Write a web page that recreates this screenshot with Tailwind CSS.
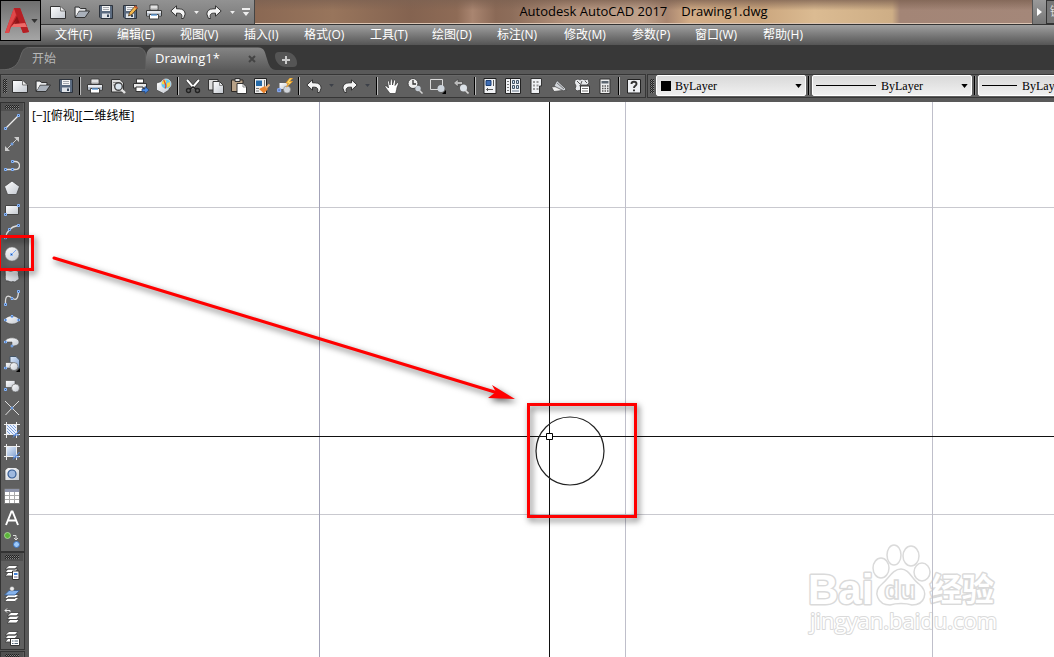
<!DOCTYPE html>
<html lang="zh-CN">
<head>
<meta charset="utf-8">
<meta name="viewport" content="width=device-width, initial-scale=1">
<title>Autodesk AutoCAD 2017 - Drawing1.dwg</title>
<script src="https://cdn.jsdelivr.net/npm/@tailwindcss/browser@4"></script>
</head>
<body class="relative flex h-screen flex-col overflow-hidden bg-[#5a5a5a] font-['Open_Sans','Noto_Sans_CJK_SC',sans-serif] text-xs">

<svg class="absolute h-0 w-0" aria-hidden="true">
  <defs>
    <linearGradient id="metal" x1="0" y1="0" x2="1" y2="1"><stop offset="0" stop-color="#fff"/><stop offset="1" stop-color="#c3c8d0"/></linearGradient>
    <linearGradient id="sky" x1="0" y1="0" x2="1" y2="1"><stop offset="0" stop-color="#e3edfb"/><stop offset="1" stop-color="#7f9fce"/></linearGradient>
  </defs>
  <symbol id="new" viewBox="0 0 16 16"><path d="M.5 2.500H10.500L15.500 7V14.500H.5Z" fill="url(#metal)" stroke="#333"/><path d="M10.500 2.500V7H15" fill="#eee" stroke="#777"/></symbol>
  <symbol id="open" viewBox="0 0 16 16"><path d="M1 13V3H5L6.500 4.500H12V7" fill="#cfd3d9" stroke="#333"/><path d="M1 13.500L5 7H15.500L11 13.500Z" fill="#a9b0ba" stroke="#333"/><path d="M2 12V4H5L6 5.500H11V6.500H5Z" fill="#f4f4f4"/></symbol>
  <symbol id="save" viewBox="0 0 16 16"><path d="M1.500 1.500H14.500V14.500H3L1.500 13Z" fill="#5b6b80" stroke="#2d333c"/><path d="M4 2H12V7H4Z" fill="#f5f5f5"/><path d="M5 3.500H11M5 5.500H11" stroke="#a5a9b0"/><path d="M4 9.500H12V14H4Z" fill="#dfe3e8"/><path d="M9 10.500H11V13H9Z" fill="#38485c"/></symbol>
  <symbol id="saveas" viewBox="0 0 16 16"><use href="#save"/><path d="M6.500 12L7.500 8.500L13 2L15.500 4L10 10.500Z" fill="#f3b64c" stroke="#443322" stroke-width=".8"/><path d="M12 3L13.500 1.500L15.800 3.500L14.500 5Z" fill="#c95b2e"/></symbol>
  <symbol id="print" viewBox="0 0 16 16"><path d="M4 1H12V6H4Z" fill="#fff" stroke="#444"/><path d="M5 3H11M5 4.500H11" stroke="#b5b5b5" stroke-width=".8"/><path d="M.5 6.500H15.500V12H.5Z" fill="#e8ebef" stroke="#3a3a3a"/><path d="M1 9H15V11.500H1Z" fill="#b6bec9"/><path d="M3.500 10.500H12.500V15H3.500Z" fill="#fff" stroke="#444"/><path d="M5 11H11" stroke="#5b9ad9" stroke-width="1.400"/></symbol>
  <symbol id="preview" viewBox="0 0 16 16"><path d="M1.500 1.500H10L13.500 5V14H1.500Z" fill="#ddd" stroke="#333"/><path d="M3 4.500H8M3 7H6" stroke="#888"/><circle cx="8.500" cy="8.500" r="3.800" fill="#dbe5ee" stroke="#444" stroke-width="1.400"/><path d="M11.500 11.500L15 15" stroke="#e3e3e3" stroke-width="2.400"/></symbol>
  <symbol id="publish" viewBox="0 0 16 16"><path d="M3.500 1H10.500V5H3.500Z" fill="#fff" stroke="#333"/><path d="M.5 5.500H13.500V10H.5Z" fill="#e9e9e9" stroke="#333"/><path d="M3 9H10V13.500H3Z" fill="#fff" stroke="#333"/><path d="M9 11H12V8.500L16 12L12 15.500V13.500H9Z" fill="#4c8de6" stroke="#1c3f77" stroke-width=".7"/></symbol>
  <symbol id="globe" viewBox="0 0 16 16"><path d="M.5 5L7 3L13 7V12L7.500 15.500L.5 12Z" fill="url(#metal)" stroke="#444" stroke-width=".7"/><circle cx="10" cy="6" r="5" fill="#62c5ee" stroke="#e8e8e8" stroke-width=".8"/><path d="M6 4C8 1 11 2 10 4S8 7 6 6ZM11 5L14 4V8L11 10Z" fill="#f8d543"/><path d="M8 1.500C7 4 12 6 9 10.500" stroke="#dd462c" fill="none" stroke-width="1.200"/></symbol>
  <symbol id="cut" viewBox="0 0 16 16"><path d="M2 2L9 10M14 2L7 10" stroke="#222" stroke-width="3.400"/><path d="M2 2L9 10M14 2L7 10" stroke="#fff" stroke-width="2"/><circle cx="3.500" cy="12.500" r="2" fill="none" stroke="#222" stroke-width="1.400"/><circle cx="12.500" cy="12.500" r="2" fill="none" stroke="#222" stroke-width="1.400"/><path d="M5 11L8 9L11 11" fill="none" stroke="#222" stroke-width="1.500"/></symbol>
  <symbol id="copy" viewBox="0 0 16 16"><path d="M.5 1.500H10V12H.5Z" fill="#ddd" stroke="#333"/><path d="M5 3.500H11.500L15.500 7.500V15.500H5Z" fill="url(#metal)" stroke="#333"/><path d="M11.500 4V7.500H15" fill="none" stroke="#888"/></symbol>
  <symbol id="paste" viewBox="0 0 16 16"><path d="M.5 2H12V13.500H.5Z" fill="#b8a288" stroke="#2d2925"/><path d="M4 .5H9V3.500H4Z" fill="#ddd" stroke="#333"/><path d="M6 5.500H12L15.500 9V15.500H6Z" fill="#fff" stroke="#333"/><path d="M12 6V9H15" fill="none" stroke="#888"/></symbol>
  <symbol id="match" viewBox="0 0 16 16"><path d="M.5 .5H12.500V15.500H.5Z" fill="#eee" stroke="#222"/><path d="M2 2.500H8V8H2Z" fill="#246aa9"/><path d="M10.500 2V9M2 10.500H5M2 13H5" stroke="#777"/><path d="M5 11L11 8L14 11L10 15.500Z" fill="#e9842e"/><path d="M12 10L15.500 6.500" stroke="#efb175" stroke-width="2"/></symbol>
  <symbol id="block" viewBox="0 0 16 16"><path d="M2.500 5H10.500V11H2.500Z" fill="url(#metal)"/><circle cx="10" cy="11.500" r="3.500" fill="#d1d5db" stroke="#777" stroke-width=".5"/><path d="M.7 10.700H3.700V13.700H.7Z" fill="#5b7ec5" stroke="#8fb2ff"/><path d="M13 0L9 5H11.500L9.500 9L15.500 3.500H12.500L15.500 0Z" fill="#ffe16b" stroke="#e99625" stroke-width=".8"/></symbol>
  <symbol id="undo" viewBox="0 0 16 16"><path d="M.8 7L6.500 1.800V4.800H9C13 4.800 15 7 15.200 10L13.500 14.500H11.500C12.500 11 11.500 9.200 8.500 9.200H6.500V12.200Z" fill="#f5f5f5" stroke="#333"/></symbol>
  <symbol id="redo" viewBox="0 0 16 16"><path d="M15.200 7L9.500 1.800V4.800H7C3 4.800 1 7 .8 10L2.500 14.500H4.500C3.500 11 4.500 9.200 7.500 9.200H9.500V12.200Z" fill="#f5f5f5" stroke="#333"/></symbol>
  <symbol id="hand" viewBox="0 0 16 16"><path d="M6 15.500C4 13 2 10 .8 8.500C1.800 7 3.500 8.500 4.500 10L3.500 3.500C4.500 2 5.500 3 6 7L6.500 1.500C7.500 .2 8.500 1 8.500 7L10 2C11.500 1 12 2 11 7.500L13.500 4.500C15 4.500 14.500 6 13 9.500C12.500 13 12 14 11.500 15.500Z" fill="#fff" stroke="#333" stroke-width=".7"/></symbol>
  <symbol id="zoomrt" viewBox="0 0 16 16"><circle cx="6" cy="5.500" r="5" fill="#eee" stroke="#444"/><path d="M6 2V6H9" stroke="#333" fill="none" stroke-width="1.300"/><circle cx="11" cy="10.500" r="2.700" fill="#c9d0d8"/><path d="M12.500 12.500L15.500 15.500" stroke="#d5d5d5" stroke-width="1.500"/></symbol>
  <symbol id="zoomwin" viewBox="0 0 16 16"><path d="M.5 1.500H12.500V11.500H.5Z" fill="none" stroke="#d9d9d9"/><circle cx="11" cy="10.500" r="3.500" fill="#cdd4dc"/><path d="M16 12V16H12Z" fill="#000"/></symbol>
  <symbol id="zoomprev" viewBox="0 0 16 16"><path d="M.5 5L5 1V3.500H9.500V6.500H5V9Z" fill="#bbb" stroke="#444" stroke-width=".7"/><circle cx="10.500" cy="10" r="3.500" fill="#dce2e8"/><path d="M12.500 12.500L15.500 15.500" stroke="#d5d5d5" stroke-width="1.700"/></symbol>
  <symbol id="props" viewBox="0 0 16 16"><path d="M2 .5H14V15.500H2Z" fill="#f0f2f5" stroke="#222"/><path d="M4 2.500H9V7.500H4Z" fill="#3d6db5" stroke="#1d3f72"/><path d="M11.500 2V8M4.500 11.500H11M6 10L4.500 11.500L6 13" fill="none" stroke="#555"/></symbol>
  <symbol id="dcenter" viewBox="0 0 16 16"><path d="M.5 .5H15.500V15.500H.5Z" fill="#f0f2f5" stroke="#222"/><path d="M5.500 1V15" stroke="#333"/><path d="M2 3.500H4M2 6.500H4M2 9.500H4M2 12.500H4" stroke="#777"/><path d="M7.500 2.500H9.500V5.500H7.500ZM11.500 2.500H13.500V5.500H11.500ZM7.500 7.500H9.500V10.500H7.500ZM11.500 7.500H13.500V10.500H11.500Z" fill="#cde" stroke="#456"/><path d="M7 13H14" stroke="#678"/></symbol>
  <symbol id="palette" viewBox="0 0 16 16"><path d="M3 .5H13.500V8H11.500V15.500H3Z" fill="#eff1f4" stroke="#333"/><path d="M5 3H7V5H5ZM8.500 3H10.500V5H8.500ZM5 6.500H7V8.500H5ZM8.500 6.500H10.500V8.500H8.500ZM5 10H7V12H5ZM8.500 10H10.500V12H8.500Z" fill="#999"/></symbol>
  <symbol id="sheets" viewBox="0 0 16 16"><path d="M.5 9L10 8L15.500 12L3 13.500Z" fill="#eee" stroke="#444" stroke-width=".7"/><path d="M3 8L6 2.500L15 11L13 13Z" fill="#cfd3d8" stroke="#444" stroke-width=".7"/><path d="M6 5L13 11" stroke="#777"/></symbol>
  <symbol id="markup" viewBox="0 0 16 16"><path d="M1 2L4 1L6 2L8 1L11 2L14 1L15 5L13 7H6L7 12L3 13L1 11L2 8L.5 5Z" fill="#e8eaed" stroke="#444" stroke-width=".8"/><path d="M3 3L6 6M8 3L6 8M11 3L13 5" stroke="#555"/><path d="M6.500 8H15.500V15.500H6.500Z" fill="#fff" stroke="#333"/><path d="M8 10.500H14M8 13H14" stroke="#777"/></symbol>
  <symbol id="calc" viewBox="0 0 16 16"><path d="M3 1H13V15.500H3Z" fill="#eee" stroke="#333"/><path d="M4.500 3H11.500V5.500H4.500Z" fill="#5c6670"/><path d="M5 8H6.500M7.500 8H9M10 8H11.500M5 10.500H6.500M7.500 10.500H9M10 10.500H11.500M5 13H6.500M7.500 13H9M10 13H11.500" stroke="#555" stroke-width="1.400"/></symbol>
  <symbol id="help" viewBox="0 0 16 16"><path d="M1.500 1.500H14.500V15H1.500Z" fill="#eef0f3" stroke="#222"/><path d="M5.500 6C5.500 3 10.500 3 10.500 6C10.500 8 8 7.500 8 10" fill="none" stroke="#333" stroke-width="1.900"/><path d="M7 11.500H9V13.300H7Z" fill="#333"/></symbol>

  <symbol id="node" viewBox="0 0 3 3"><path d="M.5 .5H2.500V2.500H.5Z" fill="#35547f" stroke="#86b6ff"/></symbol>
  <symbol id="line" viewBox="0 0 16 16"><path d="M1.500 14.500L14.500 1.500" stroke="#eee" stroke-width="1.200"/><use href="#node" y="13" width="3" height="3"/><use href="#node" x="13" width="3" height="3"/></symbol>
  <symbol id="xline" viewBox="0 0 16 16"><path d="M3 13L13 3" stroke="#ccc"/><path d="M10 1H15V6ZM1 10V15H6Z" fill="#ccc"/><use href="#node" x="6.500" y="6.500" width="3" height="3"/></symbol>
  <symbol id="pline" viewBox="0 0 16 16"><path d="M1 11.500H11C17 11.500 17 3.500 11 3.500H9" fill="none" stroke="#ddd" stroke-width="1.300"/><use href="#node" y="10" width="3" height="3"/><use href="#node" x="7" y="10" width="3" height="3"/><use href="#node" x="7" y="2" width="3" height="3"/></symbol>
  <symbol id="polygon" viewBox="0 0 16 16"><path d="M8 1L15.500 6.500L12.500 14.500H3.500L.5 6.500Z" fill="url(#metal)" stroke="#444" stroke-width=".8"/></symbol>
  <symbol id="rect" viewBox="0 0 16 16"><path d="M1.500 3.500H14.500V12.500H1.500Z" fill="url(#metal)" stroke="#444"/><use href="#node" y="11" width="3" height="3"/><use href="#node" x="13" y="2" width="3" height="3"/></symbol>
  <symbol id="arc" viewBox="0 0 16 16"><path d="M1.500 14C2.500 7 6 3 14 1.500" fill="none" stroke="#ddd" stroke-width="1.300"/><use href="#node" y="12.500" width="3" height="3"/><use href="#node" x="4" y="4" width="3" height="3"/><use href="#node" x="13" width="3" height="3"/></symbol>
  <symbol id="circle" viewBox="0 0 16 16"><circle cx="8" cy="8" r="7" fill="url(#metal)" stroke="#777" stroke-width=".5"/><path d="M8 8L12 4" stroke="#7fa9f0"/><use href="#node" x="6" y="7" width="3" height="3"/></symbol>
  <symbol id="cloud" viewBox="0 0 16 16"><path d="M1 3C4 1.500 5 4 8 3S13 2 14.500 4C13.500 7 16 10 14.500 12C12 12 12 15 9 13.500C6 15 5 12 2 13C.5 10 2 7 1 3Z" fill="url(#metal)" stroke="#444" stroke-width=".7"/></symbol>
  <symbol id="spline" viewBox="0 0 16 16"><path d="M1.500 14C1 5 4 5 8 8S14 9 14.500 2" fill="none" stroke="#ddd" stroke-width="1.300"/><use href="#node" y="13" width="3" height="3"/><use href="#node" x="6.500" y="7" width="3" height="3"/><use href="#node" x="13" width="3" height="3"/></symbol>
  <symbol id="ellipse" viewBox="0 0 16 16"><ellipse cx="8" cy="8" rx="7" ry="4" fill="url(#metal)" stroke="#444" stroke-width=".5"/><use href="#node" y="6.500" width="3" height="3"/><use href="#node" x="13" y="6.500" width="3" height="3"/><use href="#node" x="6.500" y="3" width="3" height="3"/></symbol>
  <symbol id="ellarc" viewBox="0 0 16 16"><path d="M1 8C2 2 15 3 15 8C15 11 12 12 8 12V8Z" fill="url(#metal)" stroke="#444" stroke-width=".5"/><use href="#node" y="6.500" width="3" height="3"/><use href="#node" x="6.500" y="10.500" width="3" height="3"/></symbol>
  <symbol id="insert" viewBox="0 0 16 16"><path d="M6 .5H12L15.500 4V12H6Z" fill="url(#sky)" stroke="#456"/><path d="M1.500 6.500H9V12H1.500Z" fill="url(#metal)" stroke="#444" stroke-width=".6"/><circle cx="10" cy="10.500" r="4" fill="url(#metal)" stroke="#555" stroke-width=".6"/><use href="#node" y="10.500" width="3" height="3"/><path d="M16 12V16H12Z"/></symbol>
  <symbol id="makeblock" viewBox="0 0 16 16"><path d="M1.500 2.500H11V9.500H1.500Z" fill="url(#metal)" stroke="#444" stroke-width=".6"/><circle cx="11.500" cy="10" r="4" fill="url(#metal)" stroke="#555" stroke-width=".6"/><use href="#node" y="10" width="3" height="3"/></symbol>
  <symbol id="point" viewBox="0 0 16 16"><path d="M1 1L8 8L15 1M8 8L1.500 15M8 8L15 15" stroke="#ddd" fill="none"/><use href="#node" x="6.500" y="6.500" width="3" height="3"/></symbol>
  <symbol id="hatch" viewBox="0 0 16 16"><path d="M3 3H13V13H3Z" fill="#e9f1ff"/><path d="M3 3L13 13M6 3L13 10M9 3L13 7M3 6L10 13M3 9L7 13" stroke="#7fa3dc"/><path d="M2.500 0V16M12.500 0V16M0 2.500H16M0 12.500H16" stroke="#eee"/><path d="M15.500 8L9 15.500M15 13H9" stroke="#528ce9"/></symbol>
  <symbol id="gradient" viewBox="0 0 16 16"><path d="M3 3H13V13H3Z" fill="url(#sky)"/><path d="M2.500 0V16M12.500 0V16M0 2.500H16M0 12.500H16" stroke="#eee"/><path d="M15.500 8L9 15.500M15 13H9" stroke="#528ce9"/></symbol>
  <symbol id="region" viewBox="0 0 16 16"><path d="M1 4L4 1.500H12L15.500 4V14.500H1Z" fill="url(#metal)" stroke="#444" stroke-width=".7"/><circle cx="8" cy="8" r="4" fill="#9fb9df" stroke="#345b92" stroke-width="1.200"/></symbol>
  <symbol id="table" viewBox="0 0 16 16"><path d="M.5 1H15.500V15.500H.5Z" fill="#fff" stroke="#777"/><path d="M1 1H15V4H1Z" fill="#8f95aa"/><path d="M1 7.500H15M1 11.500H15M5.500 4V15M10.500 4V15" stroke="#aaa"/></symbol>
  <symbol id="text" viewBox="0 0 16 16"><path d="M2 15L7.500 1.500H8.500L14 15M4 10.500H12" fill="none" stroke="#fff" stroke-width="1.900"/></symbol>
  <symbol id="addsel" viewBox="0 0 16 16"><circle cx="3.500" cy="3.500" r="3" fill="#5bb53a" stroke="#b8e2a5" stroke-width=".8"/><path d="M9 3.500H12V7M10 6L12 8L14 6" fill="none" stroke="#ddd"/><circle cx="12.500" cy="12.500" r="3" fill="#9dc9fa" stroke="#3c73bf"/></symbol>
  <symbol id="sheet3" viewBox="0 0 16 16"><path d="M4 8.500H14L11 12H1ZM4 5H14L11 8.500H1ZM5 1.500H14L11 5H1Z" fill="#fff" stroke="#444" stroke-width=".9"/></symbol>
  <symbol id="layers" viewBox="0 0 16 16"><use href="#sheet3"/><path d="M8.500 7H15V15.500H8.500Z" fill="#fff" stroke="#333"/><path d="M10 9H13.500V11H10Z" fill="#3f7fd8"/><path d="M10 13H13.500" stroke="#668"/></symbol>
  <symbol id="layercur" viewBox="0 0 16 16"><path d="M4 11.500H15L11 15.500H.5ZM4 8.500H15L11 12.500H.5Z" fill="#fff" stroke="#444" stroke-width=".8"/><path d="M5 4.500H15.500L11 9H.5Z" fill="#85b3ee" stroke="#335a90" stroke-width=".8"/><circle cx="8" cy="2.800" r="2.300" fill="#eee" stroke="#666" stroke-width=".5"/></symbol>
  <symbol id="layerprev" viewBox="0 0 16 16"><path d="M6 11.500H15.500L12.500 15H3ZM6 8H15.500L12.500 11.500H3ZM7 4.500H15.500L12.500 8H3Z" fill="#fff" stroke="#444" stroke-width=".9"/><path d="M6 4V2.500H1M3 .5L1 2.500L3 4.500" fill="none" stroke="#eee"/></symbol>
  <symbol id="layerstate" viewBox="0 0 16 16"><use href="#sheet3"/><path d="M6.500 8.500H15.500V15.500H6.500Z" fill="#fff" stroke="#333"/><path d="M8 11H9.500M10.500 11H14M8 13.500H9.500M10.500 13.500H14" stroke="#567"/></symbol>
  <symbol id="caret" viewBox="0 0 8 5"><path d="M0 0H8L4 5Z" fill="currentColor"/></symbol>
</svg>

<header class="relative shrink-0">
  <button aria-label="应用程序菜单" class="absolute top-0 left-0 z-10 flex h-[41px] w-[41px] items-center justify-between border border-black bg-linear-to-b from-[#6f6f6f] to-[#a5a5a5] pr-[2px] pl-1 text-[#333]">
    <svg class="h-7 w-6" viewBox="0 0 24 28"><path d="M0 26L9 1H15L24 25L18 26L15 19L6 20L4 26Z" fill="#c5282c"/><path d="M0 26L9 1L11 8L5 20L4 26Z" fill="#e0484a"/><path d="M9 1H15L24 25L18 26L11 6Z" fill="#b51f24"/><path d="M12 9L15 17L6 20Z" fill="#8f1519"/><path d="M6 20L12 13L9 17L20 16L22 20Z" fill="#ee6a68"/></svg>
    <svg class="h-1 w-[7px]"><use href="#caret"/></svg>
  </button>

  <div class="flex h-[25px] border-b border-[#333]">
    <div class="flex w-[255px] shrink-0 items-center border-r border-[#444] bg-linear-to-b from-[#929292] to-[#777] pl-[46px] text-[#eee]">
      <button aria-label="新建" class="flex h-6 w-6 items-center justify-center"><svg class="h-4 w-4"><use href="#new"/></svg></button>
      <button aria-label="打开" class="flex h-6 w-6 items-center justify-center"><svg class="h-4 w-4"><use href="#open"/></svg></button>
      <button aria-label="保存" class="flex h-6 w-6 items-center justify-center"><svg class="h-4 w-4"><use href="#save"/></svg></button>
      <button aria-label="另存为" class="flex h-6 w-6 items-center justify-center"><svg class="h-4 w-4"><use href="#saveas"/></svg></button>
      <button aria-label="打印" class="flex h-6 w-6 items-center justify-center"><svg class="h-4 w-4"><use href="#print"/></svg></button>
      <button aria-label="放弃" class="flex h-6 w-6 items-center justify-center"><svg class="h-4 w-4"><use href="#undo"/></svg></button>
      <button aria-label="放弃列表" class="flex h-6 w-3 items-center justify-center"><svg class="h-[3px] w-[5px]"><use href="#caret"/></svg></button>
      <button aria-label="重做" class="flex h-6 w-6 items-center justify-center"><svg class="h-4 w-4"><use href="#redo"/></svg></button>
      <button aria-label="重做列表" class="flex h-6 w-3 items-center justify-center"><svg class="h-[3px] w-[5px]"><use href="#caret"/></svg></button>
      <button aria-label="自定义" class="flex h-6 w-4 flex-col items-center justify-center gap-[2px]"><span class="h-[2px] w-2 bg-[#eee]"></span><svg class="h-1 w-2"><use href="#caret"/></svg></button>
    </div>
    <div class="flex min-w-0 flex-1 items-center justify-center gap-[14px] border-b border-[#dcc6b5] bg-[linear-gradient(180deg,rgba(125,98,82,0.8)_0%,transparent_45%),linear-gradient(90deg,#8a6853_0%,#98755c_10%,#846350_20%,#8e6b56_26%,#a98570_28%,#8a6956_31%,#8d6d5a_33%,#b3927c_40%,#c0a28c_50%,#a98670_53%,#d3ad87_56%,#cba67e_65%,#dbbb92_72%,#ceae86_82%,#a38576_83%,#a48779_100%)] text-[13px] text-black">
      <span>Autodesk AutoCAD 2017</span><span>Drawing1.dwg</span>
    </div>
    <button aria-label="展开搜索" class="flex w-[14px] shrink-0 items-center justify-center border-l border-[#555] bg-linear-to-b from-[#999] to-[#777] text-white"><svg class="h-2 w-[5px]" viewBox="0 0 5 8"><path d="M0 0L5 4L0 8Z" fill="currentColor"/></svg></button>
    <button aria-label="键入关键字" class="w-2 shrink-0 overflow-hidden border border-r-0 border-[#333] bg-[#777] pl-[3px] text-left whitespace-nowrap text-[#ddd]">键入</button>
  </div>

  <nav class="grid h-5 grid-cols-[62px_63px_64px_60px_66px_62px_65px_67px_68px_63px_68px_auto] items-center bg-linear-to-b from-[#a0a0a0] to-[#555] pl-[55px] whitespace-nowrap text-white">
    <a href="#">文件(F)</a><a href="#">编辑(E)</a><a href="#">视图(V)</a><a href="#">插入(I)</a><a href="#">格式(O)</a><a href="#">工具(T)</a><a href="#">绘图(D)</a><a href="#">标注(N)</a><a href="#">修改(M)</a><a href="#">参数(P)</a><a href="#">窗口(W)</a><a href="#">帮助(H)</a>
  </nav>
</header>

<div class="flex h-[25px] shrink-0 items-end bg-[#383838]">
  <button class="relative h-[23px] w-[146px] pl-8 text-left text-[#b8b8b8]">
    <svg class="absolute inset-0 h-full w-full" viewBox="0 0 146 23" preserveAspectRatio="none"><path d="M0 23C14 23 18 18 21 8C23 2 25 .5 30 .5H138C143 .5 145 4 146 8V23Z" fill="#555" stroke="#666"/></svg>
    <span class="relative">开始</span>
  </button>
  <button class="relative flex h-[23px] w-[130px] items-center justify-between pr-5 pl-[9px] text-[13px] text-white">
    <svg class="absolute inset-0 h-full w-full" viewBox="0 0 130 23" preserveAspectRatio="none"><defs><linearGradient id="tab" x1="0" y1="0" x2="0" y2="1"><stop offset="0" stop-color="#858585"/><stop offset="1" stop-color="#5a5a5a"/></linearGradient></defs><path d="M0 23V10C1 3 3 .5 8 .5H112C119 .5 119 6 121 12C123 19 125 23 130 23Z" fill="url(#tab)"/></svg>
    <span class="relative">Drawing1*</span>
    <svg class="relative h-2 w-2" viewBox="0 0 8 8"><path d="M1 1L7 7M7 1L1 7" stroke="#444" stroke-width="2"/></svg>
  </button>
  <button aria-label="新图形" class="mb-[3px] ml-[-1px] flex h-[15px] w-[22px] items-center justify-center rounded-tl-sm rounded-tr-xl rounded-br-sm rounded-bl-xl bg-[#555]"><svg class="h-2 w-2" viewBox="0 0 8 8"><path d="M4 0V8M0 4H8" stroke="#ccc" stroke-width="2"/></svg></button>
</div>

<div class="flex h-8 shrink-0 items-center overflow-hidden bg-[#595959] pb-px">
  <div class="flex h-6 shrink-0 items-center border border-[#363636] bg-[#606060] text-[#3c4048] shadow-[inset_0_1px_#686868]" role="toolbar" aria-label="标准">
    <span class="mr-px ml-[2px] h-[14px] w-1 bg-[conic-gradient(#222_25%,#888_0_50%,#222_0_75%,#555_0)] bg-[length:2px_2px]"></span>
    <button aria-label="新建" class="flex w-[23px] justify-center"><svg class="h-4 w-4"><use href="#new"/></svg></button>
    <button aria-label="打开" class="flex w-[23px] justify-center"><svg class="h-4 w-4"><use href="#open"/></svg></button>
    <button aria-label="保存" class="flex w-[23px] justify-center"><svg class="h-4 w-4"><use href="#save"/></svg></button>
    <span class="mx-[2px] h-[18px] w-[2px] border-l border-black bg-[#bbb]"></span>
    <button aria-label="打印" class="flex w-[23px] justify-center"><svg class="h-4 w-4"><use href="#print"/></svg></button>
    <button aria-label="打印预览" class="flex w-[23px] justify-center"><svg class="h-4 w-4"><use href="#preview"/></svg></button>
    <button aria-label="发布" class="flex w-[23px] justify-center"><svg class="h-4 w-4"><use href="#publish"/></svg></button>
    <button aria-label="三维打印" class="flex w-[23px] justify-center"><svg class="h-4 w-4"><use href="#globe"/></svg></button>
    <span class="mx-[2px] h-[18px] w-[2px] border-l border-black bg-[#bbb]"></span>
    <button aria-label="剪切" class="flex w-[23px] justify-center"><svg class="h-4 w-4"><use href="#cut"/></svg></button>
    <button aria-label="复制" class="flex w-[23px] justify-center"><svg class="h-4 w-4"><use href="#copy"/></svg></button>
    <button aria-label="粘贴" class="flex w-[23px] justify-center"><svg class="h-4 w-4"><use href="#paste"/></svg></button>
    <button aria-label="特性匹配" class="flex w-[23px] justify-center"><svg class="h-4 w-4"><use href="#match"/></svg></button>
    <button aria-label="块编辑器" class="flex w-[23px] justify-center"><svg class="h-4 w-4"><use href="#block"/></svg></button>
    <span class="mx-[2px] h-[18px] w-[2px] border-l border-black bg-[#bbb]"></span>
    <button aria-label="放弃" class="flex w-[23px] justify-center"><svg class="h-4 w-4"><use href="#undo"/></svg></button>
    <button aria-label="放弃列表" class="flex w-[13px] justify-center"><svg class="h-[3px] w-[5px]"><use href="#caret"/></svg></button>
    <button aria-label="重做" class="flex w-[23px] justify-center"><svg class="h-4 w-4"><use href="#redo"/></svg></button>
    <button aria-label="重做列表" class="flex w-[13px] justify-center"><svg class="h-[3px] w-[5px]"><use href="#caret"/></svg></button>
    <span class="mx-[2px] h-[18px] w-[2px] border-l border-black bg-[#bbb]"></span>
    <button aria-label="实时平移" class="flex w-[23px] justify-center"><svg class="h-4 w-4"><use href="#hand"/></svg></button>
    <button aria-label="实时缩放" class="flex w-[23px] justify-center"><svg class="h-4 w-4"><use href="#zoomrt"/></svg></button>
    <button aria-label="窗口缩放" class="flex w-[23px] justify-center"><svg class="h-4 w-4"><use href="#zoomwin"/></svg></button>
    <button aria-label="缩放上一个" class="flex w-[23px] justify-center"><svg class="h-4 w-4"><use href="#zoomprev"/></svg></button>
    <span class="mx-[2px] h-[18px] w-[2px] border-l border-black bg-[#bbb]"></span>
    <button aria-label="特性" class="flex w-[23px] justify-center"><svg class="h-4 w-4"><use href="#props"/></svg></button>
    <button aria-label="设计中心" class="flex w-[23px] justify-center"><svg class="h-4 w-4"><use href="#dcenter"/></svg></button>
    <button aria-label="工具选项板" class="flex w-[23px] justify-center"><svg class="h-4 w-4"><use href="#palette"/></svg></button>
    <button aria-label="图纸集管理器" class="flex w-[23px] justify-center"><svg class="h-4 w-4"><use href="#sheets"/></svg></button>
    <button aria-label="标记集管理器" class="flex w-[23px] justify-center"><svg class="h-4 w-4"><use href="#markup"/></svg></button>
    <button aria-label="快速计算器" class="flex w-[23px] justify-center"><svg class="h-4 w-4"><use href="#calc"/></svg></button>
    <span class="mx-[2px] h-[18px] w-[2px] border-l border-black bg-[#bbb]"></span>
    <button aria-label="帮助" class="flex w-[23px] justify-center"><svg class="h-4 w-4"><use href="#help"/></svg></button>
  </div>
  <div class="ml-px flex h-6 shrink-0 items-center border border-[#363636] bg-[#606060] font-['Liberation_Serif',serif] text-black" role="toolbar" aria-label="特性">
    <span class="mr-[2px] ml-[2px] h-[14px] w-1 bg-[conic-gradient(#222_25%,#888_0_50%,#222_0_75%,#555_0)] bg-[length:2px_2px]"></span>
    <label class="relative flex h-[21px] w-[150px] items-center">
      <select aria-label="颜色" class="h-full w-full appearance-none rounded-xs border border-white bg-linear-to-b from-[#d9d9d9] to-[#f0f0f0] pl-[18px]"><option>ByLayer</option></select>
      <span class="pointer-events-none absolute left-[5px] h-[10px] w-[10px] bg-black"></span>
      <svg class="pointer-events-none absolute right-1 h-1 w-[7px]"><use href="#caret"/></svg>
    </label>
    <span class="mx-[2px] h-[19px] w-[2px] border-l border-black bg-[#888]"></span>
    <label class="relative flex h-[21px] w-[160px] items-center">
      <select aria-label="线型" class="h-full w-full appearance-none rounded-xs border border-white bg-linear-to-b from-[#d9d9d9] to-[#f0f0f0] pl-[68px]"><option>ByLayer</option></select>
      <span class="pointer-events-none absolute left-1 h-px w-[60px] bg-black"></span>
      <svg class="pointer-events-none absolute right-1 h-1 w-[7px]"><use href="#caret"/></svg>
    </label>
    <span class="mx-[2px] h-[19px] w-[2px] border-l border-black bg-[#888]"></span>
    <label class="relative flex h-[21px] w-[160px] items-center">
      <select aria-label="线宽" class="h-full w-full appearance-none rounded-xs border border-white bg-linear-to-b from-[#d9d9d9] to-[#f0f0f0] pl-[43px]"><option>ByLayer</option></select>
      <span class="pointer-events-none absolute left-1 h-px w-[35px] bg-black"></span>
      <svg class="pointer-events-none absolute right-1 h-1 w-[7px]"><use href="#caret"/></svg>
    </label>
  </div>
</div>

<div class="flex min-h-0 flex-1">
  <aside class="flex w-[29px] shrink-0 flex-col overflow-hidden bg-[#595959] pr-1">
    <div class="flex shrink-0 flex-col items-center border border-[#333] bg-[#606060] pr-px" role="toolbar" aria-label="绘图">
      <span class="flex h-2 w-full items-center justify-center bg-[#505050]"><span class="h-1 w-[14px] bg-[conic-gradient(#222_25%,#888_0_50%,#222_0_75%,#555_0)] bg-[length:2px_2px]"></span></span>
      <button aria-label="直线" class="flex h-[22px] items-center"><svg class="h-4 w-4"><use href="#line"/></svg></button>
      <button aria-label="构造线" class="flex h-[22px] items-center"><svg class="h-4 w-4"><use href="#xline"/></svg></button>
      <button aria-label="多段线" class="flex h-[22px] items-center"><svg class="h-4 w-4"><use href="#pline"/></svg></button>
      <button aria-label="多边形" class="flex h-[22px] items-center"><svg class="h-4 w-4"><use href="#polygon"/></svg></button>
      <button aria-label="矩形" class="flex h-[22px] items-center"><svg class="h-4 w-4"><use href="#rect"/></svg></button>
      <button aria-label="圆弧" class="flex h-[22px] items-center"><svg class="h-4 w-4"><use href="#arc"/></svg></button>
      <button aria-label="圆" class="flex h-[22px] items-center"><svg class="h-4 w-4"><use href="#circle"/></svg></button>
      <button aria-label="修订云线" class="flex h-[22px] items-center"><svg class="h-4 w-4"><use href="#cloud"/></svg></button>
      <button aria-label="样条曲线" class="flex h-[22px] items-center"><svg class="h-4 w-4"><use href="#spline"/></svg></button>
      <button aria-label="椭圆" class="flex h-[22px] items-center"><svg class="h-4 w-4"><use href="#ellipse"/></svg></button>
      <button aria-label="椭圆弧" class="flex h-[22px] items-center"><svg class="h-4 w-4"><use href="#ellarc"/></svg></button>
      <button aria-label="插入块" class="flex h-[22px] items-center"><svg class="h-4 w-4"><use href="#insert"/></svg></button>
      <button aria-label="创建块" class="flex h-[22px] items-center"><svg class="h-4 w-4"><use href="#makeblock"/></svg></button>
      <button aria-label="点" class="flex h-[22px] items-center"><svg class="h-4 w-4"><use href="#point"/></svg></button>
      <button aria-label="图案填充" class="flex h-[22px] items-center"><svg class="h-4 w-4"><use href="#hatch"/></svg></button>
      <button aria-label="渐变色" class="flex h-[22px] items-center"><svg class="h-4 w-4"><use href="#gradient"/></svg></button>
      <button aria-label="面域" class="flex h-[22px] items-center"><svg class="h-4 w-4"><use href="#region"/></svg></button>
      <button aria-label="表格" class="flex h-[22px] items-center"><svg class="h-4 w-4"><use href="#table"/></svg></button>
      <button aria-label="多行文字" class="flex h-[22px] items-center"><svg class="h-4 w-4"><use href="#text"/></svg></button>
      <button aria-label="添加选定对象" class="flex h-[22px] items-center"><svg class="h-4 w-4"><use href="#addsel"/></svg></button>
    </div>
    <div class="flex shrink-0 flex-col items-center border border-[#333] bg-[#606060] pr-px" role="toolbar" aria-label="图层">
      <span class="flex h-2 w-full items-center justify-center bg-[#505050]"><span class="h-1 w-[14px] bg-[conic-gradient(#222_25%,#888_0_50%,#222_0_75%,#555_0)] bg-[length:2px_2px]"></span></span>
      <button aria-label="图层特性" class="flex h-[22px] items-center"><svg class="h-4 w-4"><use href="#layers"/></svg></button>
      <button aria-label="置为当前" class="flex h-[22px] items-center"><svg class="h-4 w-4"><use href="#layercur"/></svg></button>
      <button aria-label="上一个图层" class="flex h-[22px] items-center"><svg class="h-4 w-4"><use href="#layerprev"/></svg></button>
      <button aria-label="图层状态" class="flex h-[22px] items-center"><svg class="h-4 w-4"><use href="#layerstate"/></svg></button>
    </div>
    <div class="mt-px flex shrink-0 flex-col border border-[#333] bg-[#606060] pr-px">
      <span class="flex h-2 w-full items-center justify-center bg-[#505050]"><span class="h-1 w-[14px] bg-[conic-gradient(#222_25%,#888_0_50%,#222_0_75%,#555_0)] bg-[length:2px_2px]"></span></span>
    </div>
  </aside>

  <main class="relative min-w-0 flex-1 overflow-hidden bg-white">
    <svg class="absolute inset-0 h-full w-full" role="img" aria-label="绘图区">
      <g shape-rendering="crispEdges" stroke="#c9c9cf"><path d="M0 105.500H4000M0 412.500H4000"/><path d="M596.500 0V4000M903.500 0V4000" stroke="#bfbfca"/><path d="M290.500 0V4000" stroke="#a3a3b8"/></g>
      <g font-weight="700" stroke-linejoin="round" stroke="#dadada" stroke-width="3" paint-order="stroke" fill="#fff">
        <text x="779" y="502" font-size="42" font-family="Liberation Sans">Bai</text>
        <text x="901" y="499" font-size="32" font-family="Noto Sans CJK SC">经验</text>
        <text x="781" y="527" font-size="22" stroke-width="2" font-weight="400" font-family="Open Sans">jingyan.baidu.com</text>
      </g>
      <g fill="#fff" stroke="#dadada" stroke-width="1.500">
        <ellipse cx="852" cy="466" rx="8" ry="10"/><ellipse cx="865" cy="453" rx="7" ry="10"/><ellipse cx="882" cy="454" rx="8" ry="10"/><ellipse cx="893" cy="470" rx="8" ry="9"/>
        <path d="M872 467C864 467 860 476 853 482C843 490 849 503 861 503C867 501 877 501 883 503C896 503 900 490 890 482C883 477 880 467 872 467Z"/>
        <text x="855" y="497" font-size="26" font-weight="700" font-family="Liberation Sans">du</text>
      </g>
      <path d="M903.500 428V4000" stroke="#bfbfca" shape-rendering="crispEdges"/>
      <path d="M0 334.500H4000M520.500 0V4000" stroke="#111" shape-rendering="crispEdges"/>
      <path d="M517.500 331.500H523.500V337.500H517.500Z" fill="#fff" stroke="#000"/>
      <circle cx="541" cy="349" r="34" fill="none" stroke="#222" stroke-width="1.200"/>
    </svg>
    <button class="relative mt-[6px] ml-[3px] text-black">[−][俯视][二维线框]</button>
  </main>
</div>

<svg class="pointer-events-none absolute top-0 left-0 z-20 h-full w-full drop-shadow-[2px_3px_3px_rgba(0,0,0,0.6)]" aria-hidden="true">
  <g fill="none" stroke="#f00" stroke-width="3"><path d="M-2 236.500H32.500V269.500H-2"/><path d="M0 235V271" stroke-width="2"/><path d="M528.500 404.500H635.500V516.500H528.500Z"/><path d="M54 258L498 393" stroke-linecap="round"/></g>
  <path d="M515 399L488 398L496 392L492 385Z" fill="#f00"/>
</svg>
</body>
</html>
